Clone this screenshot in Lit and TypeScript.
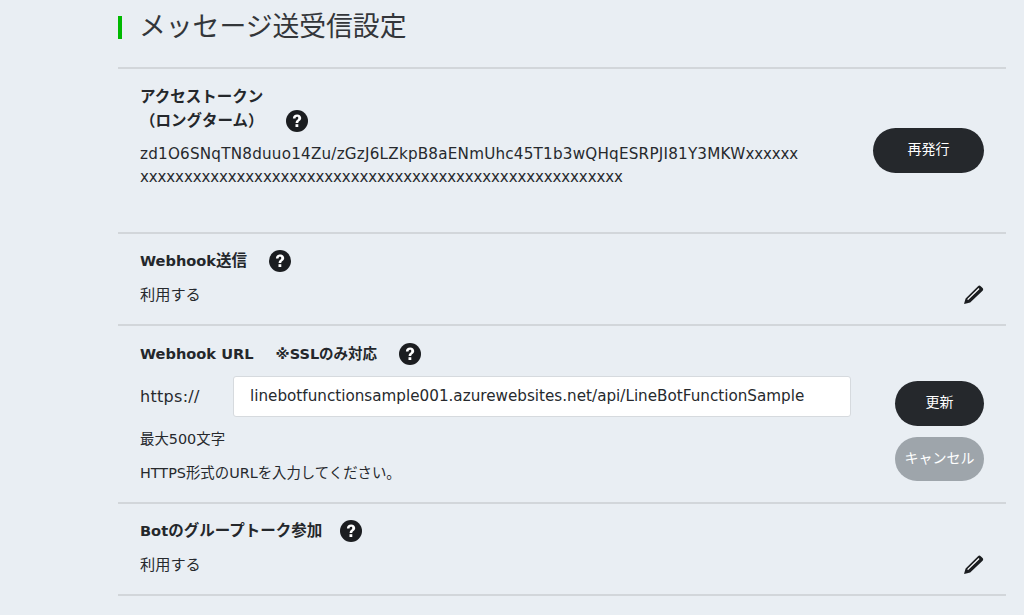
import { LitElement, html, css } from 'lit';
import { customElement } from 'lit/decorators.js';

const helpIcon = html`<svg class="help" width="22" height="22" viewBox="0 0 22 22">
  <circle cx="11" cy="11" r="11" fill="#1b1d20"></circle>
  <path d="M6.9 8.4c0-2.5 1.7-4 4.2-4s4.1 1.5 4.1 3.6c0 1.5-.8 2.3-1.8 3.1-.9.7-1.1 1.1-1.1 2H9.6c0-1.6.5-2.4 1.5-3.2.8-.6 1.2-1 1.2-1.8 0-.8-.5-1.3-1.3-1.3-.9 0-1.4.7-1.5 1.7z" fill="#fff"></path>
  <rect x="9.5" y="14.2" width="2.8" height="2.8" fill="#fff"></rect>
</svg>`;

const pencilIcon = html`<svg class="pencil" width="20" height="19" viewBox="0 0 20 19">
  <path d="M0 19 1.6 13.4 14 1.2c.8-.8 1.9-.8 2.7 0l1.9 1.8c.8.8.8 1.9 0 2.7L6.2 17.6z" fill="#1b1d20"></path>
  <path d="M3.2 14.2 14.6 3l.9.9L4.1 15.1z" fill="#fff"></path>
</svg>`;

@customElement('app-root')
export class AppRoot extends LitElement {
  static styles = css`
    :host {
      display: block;
      height: 615px;
      overflow: hidden;
      background: #e9eef3;
      color: #26292d;
      font-family: "DejaVu Sans", "Noto Sans CJK JP", sans-serif;
      font-size: 15.2px;
    }
    .page {
      margin: 0 18px 0 118px;
    }
    .title {
      display: flex;
      align-items: center;
      gap: 18px;
      height: 67px;
      padding-bottom: 13px;
      box-sizing: border-box;
    }
    .title i {
      width: 4px;
      height: 23px;
      background: #00b900;
    }
    .title h1 {
      margin: 0 0 0 -1px;
      padding-bottom: 4px;
      font-size: 26.8px;
      font-weight: 400;
      line-height: 30px;
      font-family: "Noto Sans CJK JP", sans-serif;
      color: #33363a;
    }
    .row {
      border-top: 2px solid #d2d6da;
      padding: 0 22px;
      box-sizing: border-box;
      display: flex;
      align-items: flex-start;
      justify-content: space-between;
    }
    .token { height: 165px; padding-top: 16px; }
    .webhook { height: 92px; padding-top: 15px; }
    .url { height: 178px; padding-top: 16px; }
    .group { height: 92px; padding-top: 15px; }
    .last { border-top: 2px solid #d2d6da; }
    .label {
      display: flex;
      align-items: center;
      font-size: 15.5px;
      font-weight: 700;
      line-height: 24px;
      color: #24272b;
    }
    .label .help { margin-left: 22px; }
    .label.tight .help { margin-left: 18px; }
    .lat { font-size: 14.6px; }
    .ssl { font-size: 14.5px; margin-left: 22px; }
    .main { flex: 1; min-width: 0; }
    .value { margin-top: 10px; line-height: 24px; }
    .tok {
      margin-top: 10px;
      line-height: 23px;
      white-space: nowrap;
      letter-spacing: 0.21px;
    }
    .xs { font-size: 15px; letter-spacing: -0.1px; }
    .input-row {
      display: flex;
      align-items: center;
      margin-top: 10px;
    }
    .input-row span { width: 93px; font-size: 16px; letter-spacing: 0.3px; }
    .field {
      width: 618px;
      height: 41px;
      box-sizing: border-box;
      padding: 0 16px 2px;
      display: flex;
      align-items: center;
      background: #fff;
      border: 1px solid #d6dade;
      border-radius: 3px;
      color: #26292d;
    }
    .hint { margin-top: 10px; font-size: 14.4px; line-height: 24px; }
    .hint + .hint { margin-top: 10px; }
    .btn {
      display: flex;
      align-items: center;
      justify-content: center;
      box-sizing: border-box;
      padding-bottom: 4px;
      border-radius: 23px;
      background: #25282c;
      color: #fff;
      font-size: 14px;
    }
    .wide { width: 111px; height: 44.5px; margin-top: 43px; }
    .narrow { width: 89px; height: 44.5px; }
    .muted { background: #9ea5ab; padding-bottom: 3px; }
    .actions {
      display: flex;
      flex-direction: column;
      gap: 11px;
      margin-top: 39px;
    }
    .pencil { margin-top: 36px; }
  `;

  render() {
    return html`
      <div class="page">
        <div class="title"><i></i><h1>メッセージ送受信設定</h1></div>

        <div class="row token">
          <div class="main">
            <div class="label">アクセストークン</div>
            <div class="label">（ロングターム）${helpIcon}</div>
            <div class="tok">zd1O6SNqTN8duuo14Zu/zGzJ6LZkpB8aENmUhc45T1b3wQHqESRPJI81Y3MKW<span class="xs">xxxxxx</span><br /><span class="xs">xxxxxxxxxxxxxxxxxxxxxxxxxxxxxxxxxxxxxxxxxxxxxxxxxxxxxxx</span></div>
          </div>
          <div class="btn wide">再発行</div>
        </div>

        <div class="row webhook">
          <div class="main">
            <div class="label"><span class="lat">Webhook</span>送信${helpIcon}</div>
            <div class="value">利用する</div>
          </div>
          ${pencilIcon}
        </div>

        <div class="row url">
          <div class="main">
            <div class="label"><span class="lat">Webhook URL</span><span class="ssl">※SSLのみ対応</span>${helpIcon}</div>
            <div class="input-row">
              <span>https://</span>
              <div class="field">linebotfunctionsample001.azurewebsites.net/api/LineBotFunctionSample</div>
            </div>
            <div class="hint">最大500文字</div>
            <div class="hint">HTTPS形式のURLを入力してください。</div>
          </div>
          <div class="actions">
            <div class="btn narrow">更新</div>
            <div class="btn narrow muted">キャンセル</div>
          </div>
        </div>

        <div class="row group">
          <div class="main">
            <div class="label tight"><span class="lat">Bot</span>のグループトーク参加${helpIcon}</div>
            <div class="value">利用する</div>
          </div>
          ${pencilIcon}
        </div>
        <div class="last"></div>
      </div>
    `;
  }
}
